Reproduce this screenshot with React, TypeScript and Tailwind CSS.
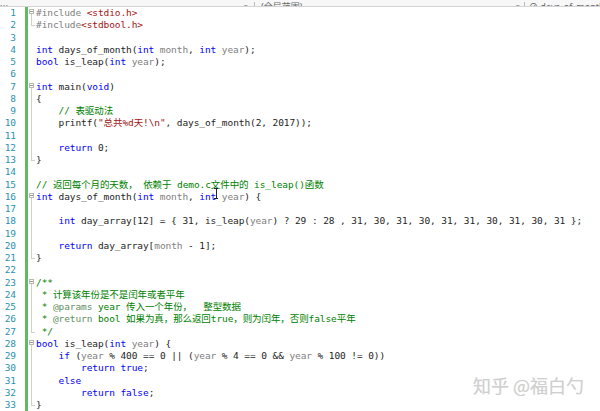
type Tok = [string, string];
type Fold = "start" | "mid" | "end" | null;

const K = "text-[#0000ff]";
const P = "text-[#808080]";
const S = "text-[#a31515]";
const C = "text-[#008000]";
const T = "text-[#5f8f5f]";
const N = "text-[#1e1e1e]";

const lines: { fold: Fold; toks: Tok[] }[] = [
  { fold: "start", toks: [["#include ", P], ["<stdio.h>", S]] },
  { fold: "end", toks: [["#include", P], ["<stdbool.h>", S]] },
  { fold: null, toks: [] },
  { fold: null, toks: [["int", K], [" days_of_month(", N], ["int", K], [" month", P], [", ", N], ["int", K], [" year", P], [");", N]] },
  { fold: null, toks: [["bool", K], [" is_leap(", N], ["int", K], [" year", P], [");", N]] },
  { fold: null, toks: [] },
  { fold: "start", toks: [["int", K], [" main(", N], ["void", K], [")", N]] },
  { fold: "mid", toks: [["{", N]] },
  { fold: "mid", toks: [["    ", N], ["// 表驱动法", C]] },
  { fold: "mid", toks: [["    printf(", N], ["\"总共%d天!\\n\"", S], [", days_of_month(2, 2017));", N]] },
  { fold: "mid", toks: [] },
  { fold: "mid", toks: [["    ", N], ["return", K], [" 0;", N]] },
  { fold: "end", toks: [["}", N]] },
  { fold: null, toks: [] },
  { fold: null, toks: [["// 返回每个月的天数， 依赖于 demo.c文件中的 is_leap()函数", C]] },
  { fold: "start", toks: [["int", K], [" days_of_month(", N], ["int", K], [" month", P], [", ", N], ["int", K], [" year", P], [") {", N]] },
  { fold: "mid", toks: [] },
  { fold: "mid", toks: [["    ", N], ["int", K], [" day_array[12] = { 31, is_leap(", N], ["year", P], [") ? 29 : 28 , 31, 30, 31, 30, 31, 31, 30, 31, 30, 31 };", N]] },
  { fold: "mid", toks: [] },
  { fold: "mid", toks: [["    ", N], ["return", K], [" day_array[", N], ["month", P], [" - 1];", N]] },
  { fold: "end", toks: [["}", N]] },
  { fold: null, toks: [] },
  { fold: "start", toks: [["/**", C]] },
  { fold: "mid", toks: [[" * 计算该年份是不是闰年或者平年", C]] },
  { fold: "mid", toks: [[" * ", C], ["@params", T], [" year 传入一个年份，  整型数据", C]] },
  { fold: "mid", toks: [[" * ", C], ["@return", T], [" bool 如果为真，那么返回true，则为闰年，否则false平年", C]] },
  { fold: "end", toks: [[" */", C]] },
  { fold: "start", toks: [["bool", K], [" is_leap(", N], ["int", K], [" year", P], [") {", N]] },
  { fold: "mid", toks: [["    ", N], ["if", K], [" (", N], ["year", P], [" % 400 == 0 || (", N], ["year", P], [" % 4 == 0 && ", N], ["year", P], [" % 100 != 0))", N]] },
  { fold: "mid", toks: [["        ", N], ["return", K], [" ", N], ["true", K], [";", N]] },
  { fold: "mid", toks: [["    ", N], ["else", K]] },
  { fold: "mid", toks: [["        ", N], ["return", K], [" ", N], ["false", K], [";", N]] },
  { fold: "end", toks: [["}", N]] },
];

// outlining margin: box on the first line, thin guide down to the closing line
const FoldMark = ({ fold }: { fold: Fold }) => {
  if (fold === "start")
    return (
      <div className="flex h-full w-[7px] flex-col items-center pt-[2px]">
        <div className="flex h-[5px] w-[5px] items-center justify-center border border-[#b8b8b8] bg-white">
          <div className="h-px w-[3px] bg-[#999]" />
        </div>
        <div className="w-px flex-1 bg-[#d0d0d0]" />
      </div>
    );
  if (fold === "mid")
    return (
      <div className="flex h-full w-[7px] justify-center">
        <div className="w-px bg-[#d0d0d0]" />
      </div>
    );
  if (fold === "end")
    return (
      <div className="flex h-[7px] w-[7px] justify-end">
        <div className="w-[4px] border-b border-l border-[#d0d0d0]" />
      </div>
    );
  return <div className="h-full w-[7px]" />;
};

export default function App() {
  return (
    <div className="relative h-[411px] w-[600px] overflow-hidden bg-white font-['DejaVu_Sans_Mono','Noto_Sans_CJK_SC',monospace]">
      <div className="flex h-[7px] items-end overflow-hidden border-b border-[#d4d4d4] bg-[#f7f7f7] font-['Noto_Sans','Noto_Sans_CJK_SC',sans-serif] text-[9px] leading-[10px] text-[#666]">
        <div className="mb-[-6px] flex w-full items-center whitespace-nowrap">
          <span className="w-[244px] shrink-0">ш</span>
          <span className="shrink-0 text-[7px]">▾</span>
          <span className="mx-[6px] h-[10px] w-px shrink-0 bg-[#bbb]" />
          <span className="w-[255px] shrink-0">(全局范围)</span>
          <span className="shrink-0 text-[7px]">▾</span>
          <span className="mx-[4px] h-[10px] w-px shrink-0 bg-[#bbb]" />
          <span className="shrink-0">⊘ days_of_month(int mo</span>
        </div>
      </div>
      <div className="flex flex-col">
        {lines.map((line, i) => (
          <div key={i} className="flex h-[12.25px] items-stretch text-[9.5px] leading-[12.25px] tracking-[-0.09px]">
            <div className="w-[17px] pr-px text-right text-[#2b91af]">{i + 1}</div>
            <div className="ml-[8px] w-[3px] bg-[#62b962]" />
            <FoldMark fold={line.fold} />
            <div className="whitespace-pre pl-px">
              {line.toks.map(([t, c], j) => (
                <span key={j} className={c}>
                  {t}
                </span>
              ))}
            </div>
          </div>
        ))}
      </div>
      <div className="absolute left-[214px] top-[188px] h-[11px] w-[4px] border-x-0 border-y border-[#222]">
        <div className="mx-auto h-full w-px bg-[#222]" />
      </div>
      <div className="absolute left-[473px] top-[374px] font-['Noto_Sans_CJK_SC',sans-serif] text-[18px] leading-[22px] text-[#cfcfcf] [text-shadow:0_0_1px_#e8e8e8]">
        知乎 @福白勺
      </div>
    </div>
  );
}
